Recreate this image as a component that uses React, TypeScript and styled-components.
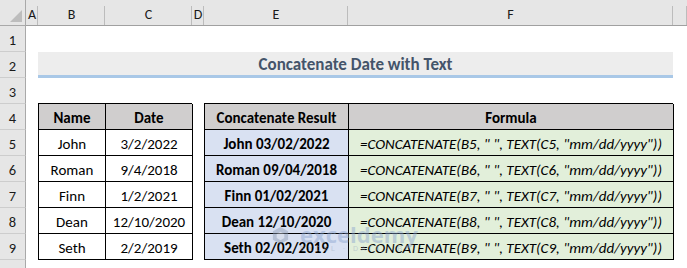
import React from 'react';
import styled, { createGlobalStyle } from 'styled-components';

const GlobalStyle = createGlobalStyle`
  html, body {
    margin: 0;
    padding: 0;
    background: #ffffff;
    overflow: hidden;
  }
  * {
    box-sizing: border-box;
  }
`;

const FONT = `Carlito, Lato, "Liberation Sans", sans-serif`;

const COLUMNS = ['A', 'B', 'C', 'D', 'E', 'F', ''];
const ROWS = [1, 2, 3, 4, 5, 6, 7, 8, 9, 10];

const people = [
  { name: 'John', date: '3/2/2022', result: 'John 03/02/2022' },
  { name: 'Roman', date: '9/4/2018', result: 'Roman 09/04/2018' },
  { name: 'Finn', date: '1/2/2021', result: 'Finn 01/02/2021' },
  { name: 'Dean', date: '12/10/2020', result: 'Dean 12/10/2020' },
  { name: 'Seth', date: '2/2/2019', result: 'Seth 02/02/2019' },
];

const Sheet = styled.div`
  position: relative;
  width: 687px;
  height: 268px;
  overflow: hidden;
  display: grid;
  grid-template-columns: 26px 12px 67px 87px 12px 144px 325px 1fr;
  grid-template-rows: repeat(11, 26px);
  font-family: ${FONT};
  font-size: 15px;
  color: #000;
`;

const Corner = styled.div`
  grid-column: 1;
  grid-row: 1;
  position: relative;
  background: #e6e6e6;
  border-right: 1px solid #a9a9a9;
  border-bottom: 1px solid #a9a9a9;

  &::after {
    content: '';
    position: absolute;
    right: 3px;
    bottom: 3px;
    border-style: solid;
    border-width: 0 0 12px 12px;
    border-color: transparent transparent #bdbdbd transparent;
  }
`;

const ColHeader = styled.div`
  grid-row: 1;
  position: relative;
  display: flex;
  align-items: center;
  justify-content: center;
  padding-top: 4px;
  background: #e6e6e6;
  border-bottom: 1px solid #a0a0a0;
  font-size: 14px;
  color: #1a1a1a;

  &::after {
    content: '';
    position: absolute;
    right: 0;
    top: 6px;
    bottom: 0;
    width: 1px;
    background: #bcbcbc;
  }
`;

const RowHeader = styled.div<{ $row: number }>`
  grid-column: 1;
  grid-row: ${(p) => p.$row + 1};
  display: flex;
  align-items: center;
  justify-content: center;
  padding-top: 3px;
  background: #e6e6e6;
  border-right: 1px solid #a9a9a9;
  border-bottom: 1px solid #cdcdcd;
  font-size: 14.5px;
  color: #1a1a1a;
`;

const TitleBand = styled.div`
  grid-column: 3 / 8;
  grid-row: 3;
  display: flex;
  align-items: center;
  justify-content: center;
  padding-top: 1px;
  background: #ededed;
  border-bottom: 3px solid #a9c8e7;
  font-weight: 700;
  font-size: 17px;
  color: #44546a;
`;

const Table = styled.div<{ $col: string; $widths: string }>`
  grid-column: ${(p) => p.$col};
  grid-row: 5 / 11;
  margin-top: -1px;
  display: grid;
  grid-template-columns: ${(p) => p.$widths};
  grid-template-rows: repeat(6, 26px);
  border-top: 1px solid #000;
  border-left: 1px solid #000;
`;

const Cell = styled.div<{ $bg?: string; $bold?: boolean; $italic?: boolean }>`
  display: flex;
  align-items: center;
  justify-content: center;
  padding-top: 2px;
  white-space: nowrap;
  background: ${(p) => p.$bg || '#ffffff'};
  font-weight: ${(p) => (p.$bold ? 700 : 400)};
  font-style: ${(p) => (p.$italic ? 'italic' : 'normal')};
  border-right: 1px solid #000;
  border-bottom: 1px solid #000;
  color: #000;
`;

const HEAD_BG = '#d0cece';
const RESULT_BG = '#d9e1f2';
const FORMULA_BG = '#e2efda';

const Watermark = styled.div`
  position: absolute;
  left: 271px;
  top: 226px;
  display: flex;
  align-items: flex-start;
  gap: 10px;
  opacity: 0.45;
  pointer-events: none;
`;

const MarkText = styled.div`
  display: flex;
  flex-direction: column;
  line-height: 1;
`;

const MarkName = styled.span`
  font-family: "Open Sans", "Liberation Sans", sans-serif;
  font-weight: 700;
  font-size: 22px;
  color: #8aa4cf;
  margin-top: -3px;
`;

const MarkTag = styled.span`
  font-family: "Liberation Sans", sans-serif;
  font-size: 7px;
  letter-spacing: 3px;
  color: #9aa9bf;
  margin-top: 0;
`;

const LogoMark = () => (
  <svg width="19" height="19" viewBox="0 0 20 20">
    <path d="M10 1 L18 5.5 L18 14.5 L10 19 L2 14.5 L2 5.5 Z" fill="#8c9bb3" />
    <path d="M10 6 L14 8.3 L14 12.7 L10 15 L6 12.7 L6 8.3 Z" fill="#d7dde8" />
  </svg>
);

export default function App() {
  return (
    <>
      <GlobalStyle />
      <Sheet>
        <Corner />
        {COLUMNS.map((c, i) => (
          <ColHeader key={i} style={{ gridColumn: i + 2 }}>
            {c}
          </ColHeader>
        ))}
        {ROWS.map((r) => (
          <RowHeader key={r} $row={r}>
            {r}
          </RowHeader>
        ))}

        <TitleBand>Concatenate Date with Text</TitleBand>

        <Table $col="3 / 5" $widths="67px 87px">
          <Cell $bg={HEAD_BG} $bold>Name</Cell>
          <Cell $bg={HEAD_BG} $bold>Date</Cell>
          {people.map((p) => (
            <React.Fragment key={p.name}>
              <Cell>{p.name}</Cell>
              <Cell>{p.date}</Cell>
            </React.Fragment>
          ))}
        </Table>

        <Table $col="6 / 8" $widths="144px 325px">
          <Cell $bg={HEAD_BG} $bold>Concatenate Result</Cell>
          <Cell $bg={HEAD_BG} $bold>Formula</Cell>
          {people.map((p, i) => (
            <React.Fragment key={p.name}>
              <Cell $bg={RESULT_BG} $bold>{p.result}</Cell>
              <Cell $bg={FORMULA_BG} $italic>
                {`=CONCATENATE(B${i + 5}, " ", TEXT(C${i + 5}, "mm/dd/yyyy"))`}
              </Cell>
            </React.Fragment>
          ))}
        </Table>

        <Watermark>
          <LogoMark />
          <MarkText>
            <MarkName>exceldemy</MarkName>
            <MarkTag>EXCEL · DATA · BI</MarkTag>
          </MarkText>
        </Watermark>
      </Sheet>
    </>
  );
}
